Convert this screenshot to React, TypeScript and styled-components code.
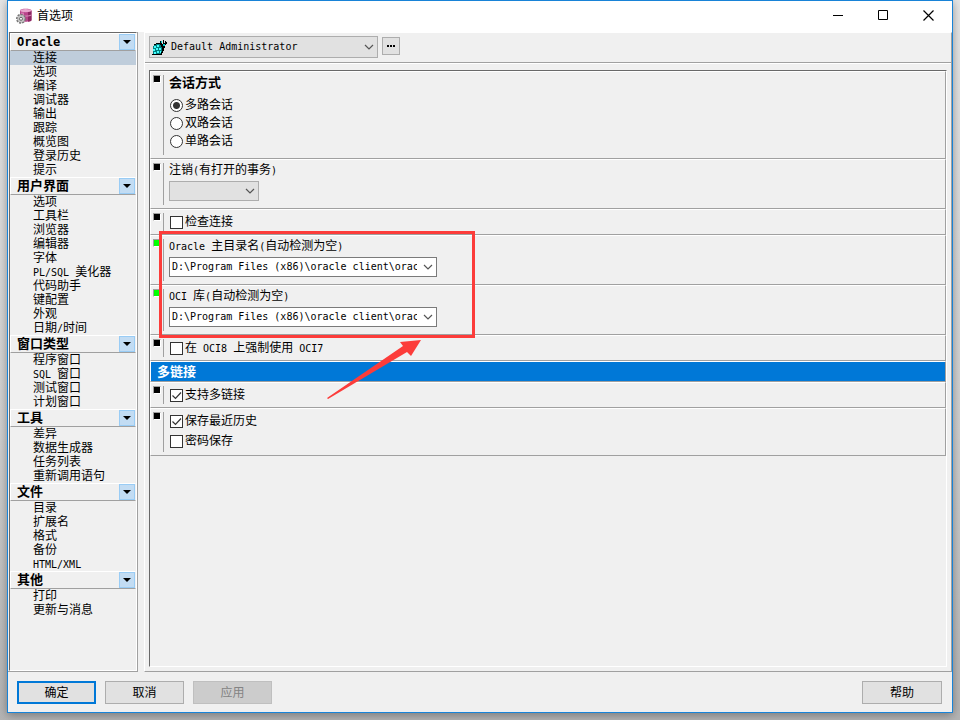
import React from "react";
import styled, { createGlobalStyle } from "styled-components";

const GlobalStyle = createGlobalStyle`
  * { box-sizing: border-box; }
  html, body { margin: 0; padding: 0; }
  body {
    background: #b8b8b8;
    color: #000;
    font: 12px/14px "Liberation Sans", "Noto Sans CJK SC", sans-serif;
  }
  button, select, input { font: inherit; color: inherit; margin: 0; }
`;

const Desktop = styled.div`
  display: flex;
  min-height: 100vh;
  padding: 0 7px 7px;
  background: linear-gradient(180deg, #e6e6e6 0%, #cfcfcf 60%, #b4b4b4 100%);
`;

const Window = styled.div`
  position: relative;
  flex: 1;
  min-width: 0;
  display: flex;
  flex-direction: column;
  border: 1px solid #1883d7;
  background: #f0f0f0;
  box-shadow: 0 2px 9px rgba(0, 0, 0, 0.35);
`;

const TitleBar = styled.header`
  display: flex;
  align-items: center;
  height: 31px;
  padding: 0 1px 2px 8px;
  background: #fff;
`;

const Title = styled.h1`
  flex: 1;
  margin: 0 0 0 5px;
  font-size: 12px;
  font-weight: 400;
`;

const CaptionButton = styled.button`
  display: flex;
  align-items: center;
  justify-content: center;
  width: 45px;
  height: 29px;
  padding: 0;
  border: 0;
  background: transparent;
`;

const Body = styled.div`
  flex: 1;
  display: flex;
  gap: 6px;
`;

const Sidebar = styled.nav`
  width: 130px;
  padding-left: 1px;
  border-right: 1px solid #a0a0a0;
  border-bottom: 1px solid #a0a0a0;
`;

const SidebarInner = styled.div`
  height: 100%;
  border: 1px solid;
  border-color: #696969 #fff #fff #696969;
`;

const GroupHead = styled.div`
  display: flex;
  align-items: center;
  height: 18px;
  padding-left: 6px;
  border: 1px solid;
  border-color: #fff transparent #a0a0a0 #fff;
`;

const GroupName = styled.h2`
  flex: 1;
  margin: 0;
  font-size: 13px;
  line-height: 16px;
  font-weight: 700;
`;

const GroupButton = styled.button`
  display: flex;
  align-items: center;
  justify-content: center;
  width: 16px;
  height: 16px;
  padding: 0;
  border: 1px solid #99ccf5;
  background: #c2dcf3;
`;

const List = styled.ul`
  margin: 0;
  padding: 0;
  list-style: none;
`;

const Item = styled.a<{ $active?: boolean }>`
  display: block;
  height: 14px;
  padding-left: 23px;
  color: #000;
  text-decoration: none;
  white-space: nowrap;
  background: ${(p) => (p.$active ? "#bfcddb" : "transparent")};
`;

const Latin = styled.span<{ $bold?: boolean }>`
  font-family: "DejaVu Sans Mono", monospace;
  font-size: ${(p) => (p.$bold ? 12 : 10)}px;
  line-height: 10px;
  white-space: pre;
`;

const Pane = styled.main`
  flex: 1;
  min-width: 0;
  display: flex;
  flex-direction: column;
  border: 1px solid;
  border-color: #fff #a0a0a0 #a0a0a0 #fff;
`;

const Toolbar = styled.div`
  display: flex;
  align-items: flex-start;
  gap: 4px;
  height: 31px;
  padding: 3px 4px 0;
  border-bottom: 1px solid #fff;
  box-shadow: inset 0 -1px #a0a0a0;
`;

const SelectBox = styled.span<{ $width: number; $height: number }>`
  position: relative;
  display: flex;
  width: ${(p) => p.$width}px;
  height: ${(p) => p.$height}px;
`;

const Select = styled.select<{ $filled?: boolean; $indent?: number }>`
  appearance: none;
  width: 100%;
  height: 100%;
  padding: 0 19px 1px ${(p) => p.$indent ?? 2}px;
  border: 1px solid ${(p) => (p.$filled ? "#adadad" : "#7a7a7a")};
  border-radius: 0;
  background: ${(p) => (p.$filled ? "#e1e1e1" : "#fff")};
  opacity: 1;
  font-family: "DejaVu Sans Mono", monospace;
  font-size: 10px;
`;

const SelectChevron = styled.svg`
  position: absolute;
  top: 50%;
  right: 4px;
  margin-top: -3px;
  pointer-events: none;
`;

const SelectIcon = styled.svg`
  position: absolute;
  left: 3px;
  top: 3px;
  pointer-events: none;
`;

const MoreButton = styled.button`
  display: flex;
  align-items: center;
  justify-content: center;
  width: 18px;
  height: 18px;
  margin-top: 1px;
  padding: 0;
  border: 1px solid #adadad;
  background: #e1e1e1;
`;

const Panel = styled.div`
  flex: 1;
  margin: 6px 4px 4px;
  border: 1px solid;
  border-color: #696969 #fff #fff #696969;
`;

const Row = styled.section<{ $height: number }>`
  display: flex;
  min-height: ${(p) => p.$height}px;
  padding: 3px 3px 3px 2px;
  border: 1px solid;
  border-color: #fff #a0a0a0 #a0a0a0 #fff;
`;

const Marker = styled.span<{ $changed?: boolean }>`
  width: 8px;
  height: 8px;
  border: 1px solid;
  border-color: #a0a0a0 #fff #fff #a0a0a0;
  background: ${(p) => (p.$changed ? "#00ff00" : "#000")};
`;

const Content = styled.div<{ $gap?: number }>`
  flex: 1;
  display: flex;
  flex-direction: column;
  gap: ${(p) => p.$gap ?? 0}px;
  margin-left: 2px;
  padding-left: 5px;
  border-left: 1px solid #a0a0a0;
`;

const SectionTitle = styled.h3`
  margin: 0 0 5px;
  font-size: 13px;
  line-height: 16px;
  font-weight: 700;
`;

const Field = styled.div`
  display: flex;
  flex-direction: column;
  gap: 4px;
`;

const Option = styled.label`
  display: flex;
  align-items: center;
  gap: 2px;
  height: 18px;
  padding-left: 1px;
`;

const Radio = styled.input`
  appearance: none;
  width: 13px;
  height: 13px;
  border: 1px solid #333;
  border-radius: 50%;
  background: #fff;
  &:checked {
    background: radial-gradient(circle, #333 0 3px, #fff 4px);
  }
`;

const Check = styled.input`
  appearance: none;
  width: 13px;
  height: 13px;
  border: 1px solid #333;
  background: #fff;
  &:checked {
    background: #fff url("data:image/svg+xml,%3Csvg xmlns='http://www.w3.org/2000/svg' viewBox='0 0 11 11'%3E%3Cpath d='M1.5 5.5l3 3 5.5-6' fill='none' stroke='%23333' stroke-width='1.2'/%3E%3C/svg%3E");
  }
`;

const Banner = styled.h2`
  height: 21px;
  margin: 0;
  padding-left: 6px;
  border: 1px solid;
  border-color: #fff #a0a0a0 #a0a0a0 #fff;
  background: #0078d7;
  color: #fff;
  font-size: 13px;
  line-height: 19px;
  font-weight: 700;
`;

const Footer = styled.footer`
  display: flex;
  gap: 9px;
  height: 40px;
  padding: 9px 10px 0 9px;
`;

const Button = styled.button<{ $primary?: boolean; $end?: boolean }>`
  width: ${(p) => (p.$end ? 80 : 79)}px;
  height: 23px;
  padding: 0;
  margin-left: ${(p) => (p.$end ? "auto" : "0")};
  border: ${(p) => (p.$primary ? "2px solid #0078d7" : "1px solid #adadad")};
  background: #e1e1e1;
  &:disabled {
    border-color: #bfbfbf;
    background: #ccc;
    color: #838383;
  }
`;

const Highlight = styled.div`
  position: absolute;
  left: 151px;
  top: 230px;
  width: 316px;
  height: 107px;
  border: 3px solid #fc3c3a;
  pointer-events: none;
`;

const Arrow = styled.svg`
  position: absolute;
  left: 318px;
  top: 338px;
  pointer-events: none;
`;

function Mixed({ text, bold }: { text: string; bold?: boolean }) {
  return (
    <>
      {text.split(/([\x20-\x7e]+)/).filter(Boolean).map((part, i) =>
        /^[\x20-\x7e]/.test(part) ? <Latin key={i} $bold={bold}>{part}</Latin> : part
      )}
    </>
  );
}

const groups = [
  { name: "Oracle", items: ["连接", "选项", "编译", "调试器", "输出", "跟踪", "概览图", "登录历史", "提示"] },
  { name: "用户界面", items: ["选项", "工具栏", "浏览器", "编辑器", "字体", "PL/SQL 美化器", "代码助手", "键配置", "外观", "日期/时间"] },
  { name: "窗口类型", items: ["程序窗口", "SQL 窗口", "测试窗口", "计划窗口"] },
  { name: "工具", items: ["差异", "数据生成器", "任务列表", "重新调用语句"] },
  { name: "文件", items: ["目录", "扩展名", "格式", "备份", "HTML/XML"] },
  { name: "其他", items: ["打印", "更新与消息"] },
];

const clientPath = "D:\\Program Files (x86)\\oracle client\\orac";

function Chevron() {
  return (
    <SelectChevron width="10" height="7" viewBox="0 0 10 7">
      <path d="M1 1l4 4 4-4" fill="none" stroke="#555" strokeWidth="1.2" />
    </SelectChevron>
  );
}

function AppIcon() {
  return (
    <svg width="16" height="16" viewBox="0 0 16 16" aria-hidden="true">
      <path d="M4 2.5C4 .3 15.5 .3 15.5 2.5v9.500c0 2.300-11.500 2.300-11.500 0z" fill="#b8448a" />
      <path d="M12 3h3.500v9c0 1-1.500 1.600-3.500 1.700z" fill="#8c2862" />
      <path d="M5 4.500h3v8H5z" fill="#d779b0" />
      <ellipse cx="9.700" cy="2.600" rx="5.500" ry="1.700" fill="#e9a6cd" />
      <path d="M4 7c2 1.500 9 1.500 11.500 0" fill="none" stroke="#dc8dbb" />
      <circle cx="5" cy="10.800" r="4" fill="#bbb" stroke="#777" strokeWidth="2" strokeDasharray="2 1" />
      <circle cx="5" cy="10.800" r="3.500" fill="#c4c4c4" />
      <circle cx="5" cy="10.800" r="1.500" fill="#fff" stroke="#666" />
    </svg>
  );
}

function ProfileIcon() {
  return (
    <SelectIcon width="16" height="16" viewBox="0 0 16 16" shapeRendering="crispEdges">
      <path d="M1 7h1V6h2V5h5v2h3v5h-1v2h-1v2H1z" fill="#007f7f" />
      <path d="M2 7h2v2H2zM5 6h2v2H5zM1 10h2v2H1zM4 9h2v2H4zM7 9h2v2H7zM2 13h2v2H2zM5 12h2v2H5zM8 12h1v2H8z" fill="#4ff" />
      <path d="M8 2h1v2h1v1h1V1h1v3h1V2h1v1h1v2h-1v1h-1v3h-1v3h-1v2h-1v2H0v-1h9v-2h1V8H9V6H8zM4 4h4v1H4zM2 5h2v1H2z" fill="#000" />
      <path d="M9 2h1v2H9zM11 5h2v2h-2z" fill="#0cc" />
    </SelectIcon>
  );
}

export default function App() {
  return (
    <>
      <GlobalStyle />
      <Desktop>
        <Window>
          <TitleBar>
            <AppIcon />
            <Title>首选项</Title>
            <CaptionButton aria-label="最小化">
              <svg width="11" height="11"><path d="M0 5.500h10" stroke="#000" /></svg>
            </CaptionButton>
            <CaptionButton aria-label="最大化">
              <svg width="11" height="11"><path d="M.5 .5h9v9h-9z" fill="none" stroke="#000" /></svg>
            </CaptionButton>
            <CaptionButton aria-label="关闭">
              <svg width="11" height="11"><path d="M.5 .5l10 10M10.500 .5l-10 10" stroke="#000" strokeWidth="1.2" /></svg>
            </CaptionButton>
          </TitleBar>
          <Body>
            <Sidebar>
              <SidebarInner>
                {groups.map((g, gi) => (
                  <React.Fragment key={g.name}>
                    <GroupHead>
                      <GroupName><Mixed text={g.name} bold /></GroupName>
                      <GroupButton aria-label={g.name}>
                        <svg width="8" height="4"><path d="M0 0h8L4 4z" /></svg>
                      </GroupButton>
                    </GroupHead>
                    <List>
                      {g.items.map((item, i) => (
                        <li key={item}>
                          <Item href="#" $active={gi === 0 && i === 0}><Mixed text={item} /></Item>
                        </li>
                      ))}
                    </List>
                  </React.Fragment>
                ))}
              </SidebarInner>
            </Sidebar>
            <Pane>
              <Toolbar>
                <SelectBox $width={229} $height={22}>
                  <Select $filled $indent={21} aria-label="Profile"><option>Default Administrator</option></Select>
                  <ProfileIcon />
                  <Chevron />
                </SelectBox>
                <MoreButton aria-label="更多">
                  <svg width="8" height="2"><path d="M0 0h2v2H0zM3 0h2v2H3zM6 0h2v2H6z" /></svg>
                </MoreButton>
              </Toolbar>
              <Panel>
                <Row $height={88}>
                  <Marker />
                  <Content>
                    <SectionTitle>会话方式</SectionTitle>
                    <Option><Radio type="radio" name="session" defaultChecked />多路会话</Option>
                    <Option><Radio type="radio" name="session" />双路会话</Option>
                    <Option><Radio type="radio" name="session" />单路会话</Option>
                  </Content>
                </Row>
                <Row $height={50}>
                  <Marker />
                  <Content>
                    <Field>
                      <label htmlFor="logoff"><Mixed text="注销(有打开的事务)" /></label>
                      <SelectBox $width={90} $height={20}>
                        <Select id="logoff" $filled disabled><option></option></Select>
                        <Chevron />
                      </SelectBox>
                    </Field>
                  </Content>
                </Row>
                <Row $height={26}>
                  <Marker />
                  <Content><Option><Check type="checkbox" />检查连接</Option></Content>
                </Row>
                <Row $height={50}>
                  <Marker $changed />
                  <Content>
                    <Field>
                      <label htmlFor="home"><Mixed text="Oracle 主目录名(自动检测为空)" /></label>
                      <SelectBox $width={268} $height={20}>
                        <Select id="home"><option>{clientPath}</option></Select>
                        <Chevron />
                      </SelectBox>
                    </Field>
                  </Content>
                </Row>
                <Row $height={50}>
                  <Marker $changed />
                  <Content>
                    <Field>
                      <label htmlFor="oci"><Mixed text="OCI 库(自动检测为空)" /></label>
                      <SelectBox $width={268} $height={20}>
                        <Select id="oci"><option>{clientPath}</option></Select>
                        <Chevron />
                      </SelectBox>
                    </Field>
                  </Content>
                </Row>
                <Row $height={26}>
                  <Marker />
                  <Content>
                    <Option><Check type="checkbox" /><span><Mixed text="在 OCI8 上强制使用 OCI7" /></span></Option>
                  </Content>
                </Row>
                <Banner>多链接</Banner>
                <Row $height={26}>
                  <Marker />
                  <Content><Option><Check type="checkbox" defaultChecked />支持多链接</Option></Content>
                </Row>
                <Row $height={48}>
                  <Marker />
                  <Content $gap={2}>
                    <Option><Check type="checkbox" defaultChecked />保存最近历史</Option>
                    <Option><Check type="checkbox" />密码保存</Option>
                  </Content>
                </Row>
              </Panel>
            </Pane>
          </Body>
          <Footer>
            <Button $primary>确定</Button>
            <Button>取消</Button>
            <Button disabled>应用</Button>
            <Button $end>帮助</Button>
          </Footer>
          <Highlight />
          <Arrow width="98" height="64" viewBox="0 0 98 64">
            <path d="M1 59L77 7l-3-4 21-2-10 16-4-4L2 60z" fill="#fc3c3a" />
          </Arrow>
        </Window>
      </Desktop>
    </>
  );
}
